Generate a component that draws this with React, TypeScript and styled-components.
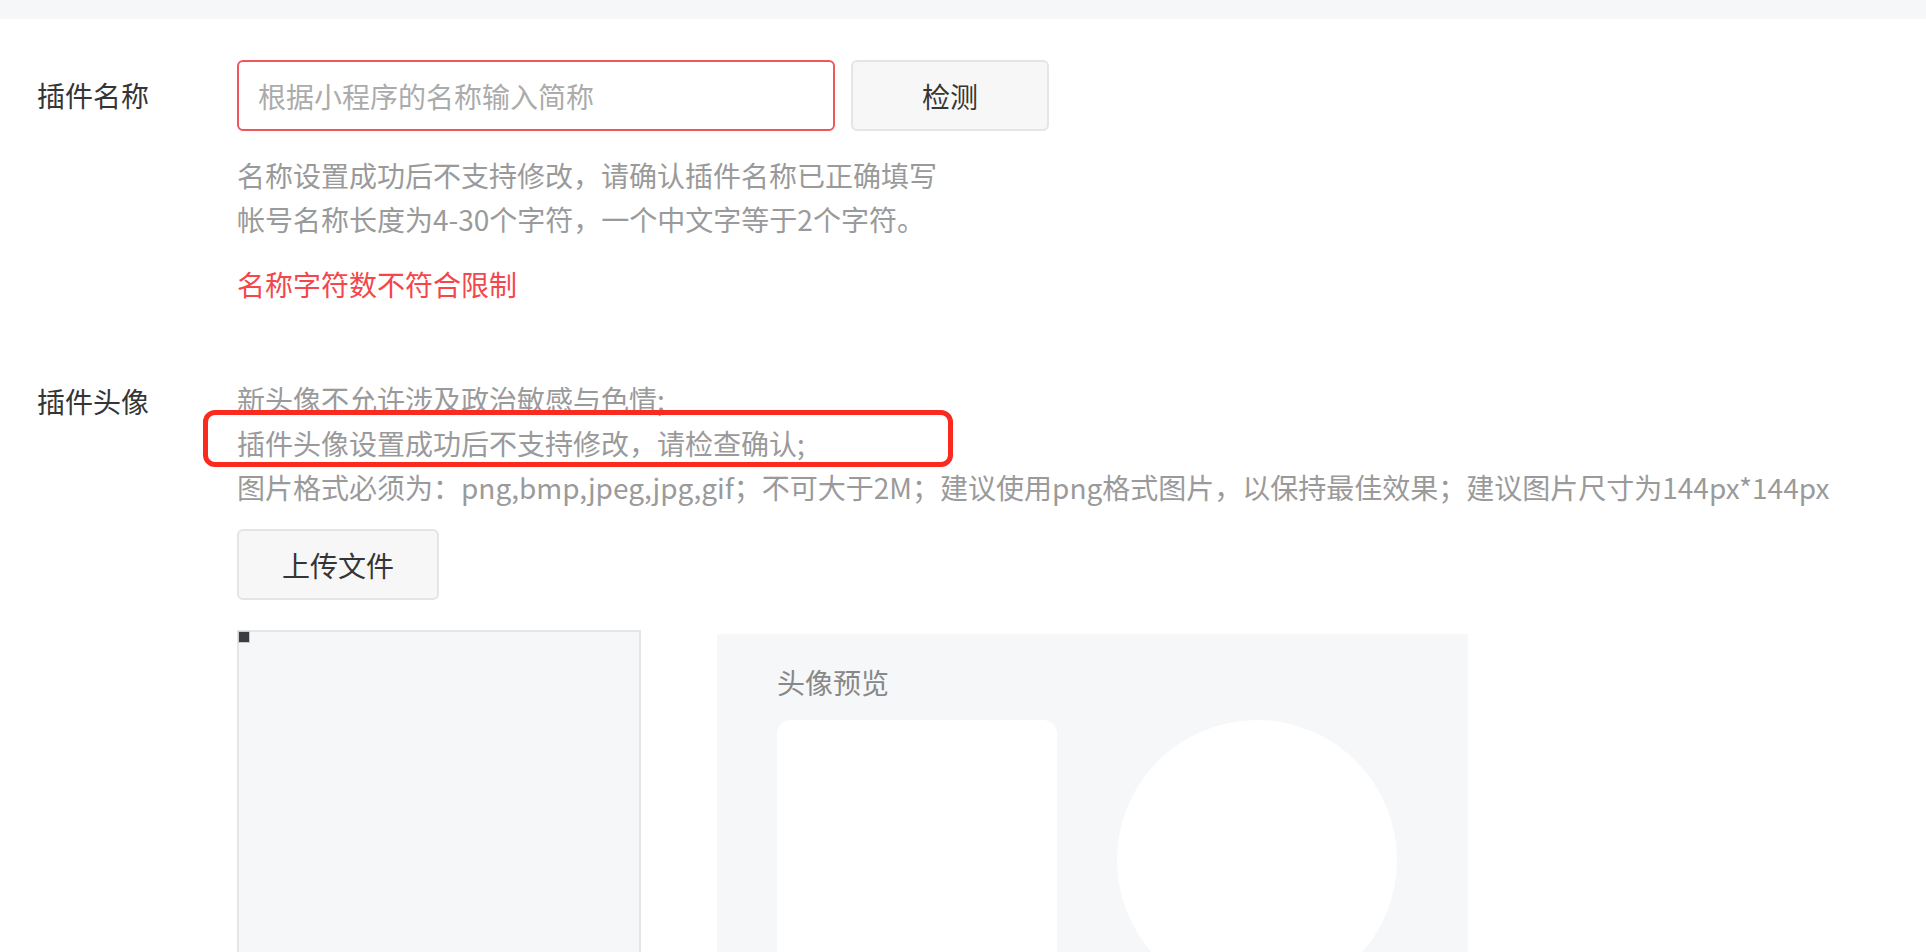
import styled, { createGlobalStyle } from "styled-components";

const GlobalStyle = createGlobalStyle`
  html, body {
    margin: 0;
    padding: 0;
    background: #fff;
    overflow: hidden;
  }
  body {
    font-family: "Noto Sans CJK SC", "Noto Sans", sans-serif;
    color: #353535;
  }
  * {
    box-sizing: border-box;
  }
`;

const TopBar = styled.div`
  height: 19px;
  background-color: #f6f7f9;
`;

const Form = styled.div`
  padding: 41px 0 0 37px;
`;

const FormRow = styled.div<{ $gap?: number }>`
  display: flex;
  align-items: flex-start;
  margin-top: ${(p) => p.$gap ?? 0}px;
`;

const Label = styled.div<{ $lineHeight: number }>`
  width: 200px;
  flex-shrink: 0;
  font-size: 28px;
  line-height: ${(p) => p.$lineHeight}px;
  color: #353535;
`;

const Field = styled.div`
  display: flex;
  flex-direction: column;
  align-items: flex-start;
`;

const InputRow = styled.div`
  display: flex;
  gap: 16px;
`;

const TextInput = styled.input<{ $error?: boolean }>`
  width: 598px;
  height: 71px;
  padding: 0 19px;
  border: 2px solid ${(p) => (p.$error ? "#f2565a" : "#e2e3e7")};
  border-radius: 6px;
  font-family: inherit;
  font-size: 28px;
  color: #353535;
  outline: none;
  &::placeholder {
    color: #ababab;
  }
`;

const Button = styled.button<{ $width: number }>`
  width: ${(p) => p.$width}px;
  height: 71px;
  background-color: #f7f7f7;
  border: 2px solid #e3e5e9;
  border-radius: 6px;
  font-family: inherit;
  font-size: 28px;
  color: #353535;
  cursor: pointer;
  padding: 0;
`;

const Tips = styled.div<{ $top?: number }>`
  position: relative;
  margin-top: ${(p) => p.$top ?? 0}px;
  font-size: 28px;
  line-height: 44px;
  color: #9a9a9a;
  white-space: nowrap;
`;

const ErrorText = styled.div`
  margin-top: 21px;
  font-size: 28px;
  line-height: 44px;
  color: #f4474c;
`;

// red annotation frame drawn over the second tip line
const Highlight = styled.div`
  position: absolute;
  left: -34px;
  top: 33px;
  width: 750px;
  height: 57px;
  border: 5px solid #fb2a1f;
  border-radius: 12px;
  pointer-events: none;
`;

const UploadRow = styled.div`
  margin-top: 20px;
`;

const PreviewArea = styled.div`
  display: flex;
  align-items: flex-start;
  gap: 76px;
  margin-top: 30px;
`;

const CropBox = styled.div`
  position: relative;
  width: 404px;
  height: 420px;
  background-color: #f6f7f9;
  border: 2px solid #e4e5e9;
`;

const CropHandle = styled.span`
  position: absolute;
  top: 0;
  left: 0;
  width: 10px;
  height: 10px;
  background-color: #3b3d40;
  box-shadow: 0 0 0 1px #c9cacd;
`;

const PreviewPanel = styled.div`
  width: 751px;
  margin-top: 4px;
  padding: 26px 60px 60px;
  background-color: #f6f7f9;
`;

const PreviewTitle = styled.div`
  font-size: 28px;
  line-height: 44px;
  color: #888;
`;

const PreviewShapes = styled.div`
  display: flex;
  gap: 60px;
  margin-top: 16px;
`;

const Avatar = styled.div<{ $round?: boolean }>`
  width: 280px;
  height: 280px;
  background-color: #fff;
  border-radius: ${(p) => (p.$round ? "50%" : "14px")};
`;

export default function App() {
  return (
    <>
      <GlobalStyle />
      <TopBar />
      <Form>
        <FormRow>
          <Label $lineHeight={71}>插件名称</Label>
          <Field>
            <InputRow>
              <TextInput $error placeholder="根据小程序的名称输入简称" />
              <Button $width={198}>检测</Button>
            </InputRow>
            <Tips $top={22}>
              <div>名称设置成功后不支持修改，请确认插件名称已正确填写</div>
              <div>帐号名称长度为4-30个字符，一个中文字等于2个字符。</div>
            </Tips>
            <ErrorText>名称字符数不符合限制</ErrorText>
          </Field>
        </FormRow>
        <FormRow $gap={71}>
          <Label $lineHeight={48}>插件头像</Label>
          <Field>
            <Tips>
              <div>新头像不允许涉及政治敏感与色情;</div>
              <div>插件头像设置成功后不支持修改，请检查确认;</div>
              <div>图片格式必须为：png,bmp,jpeg,jpg,gif；不可大于2M；建议使用png格式图片，以保持最佳效果；建议图片尺寸为144px*144px</div>
              <Highlight />
            </Tips>
            <UploadRow>
              <Button $width={202}>上传文件</Button>
            </UploadRow>
            <PreviewArea>
              <CropBox>
                <CropHandle />
              </CropBox>
              <PreviewPanel>
                <PreviewTitle>头像预览</PreviewTitle>
                <PreviewShapes>
                  <Avatar />
                  <Avatar $round />
                </PreviewShapes>
              </PreviewPanel>
            </PreviewArea>
          </Field>
        </FormRow>
      </Form>
    </>
  );
}
